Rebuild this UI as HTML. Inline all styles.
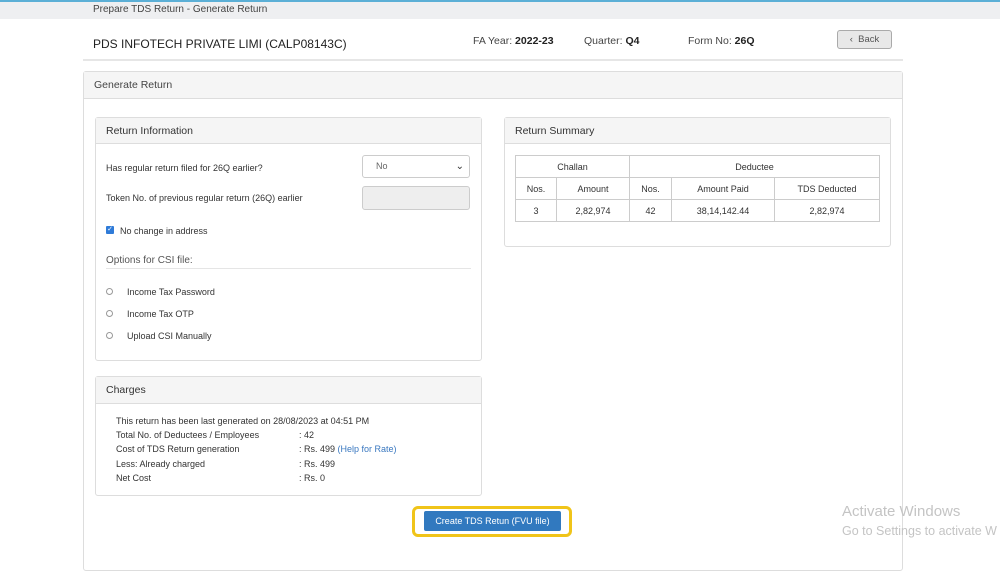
<!DOCTYPE html>
<html><head><meta charset="utf-8"><style>
*{box-sizing:border-box;margin:0;padding:0}
body{width:1000px;height:562px;overflow:hidden;background:#fff;font-family:"Liberation Sans",sans-serif;color:#333;position:relative;font-size:9px}
.a{position:absolute;white-space:nowrap}
.panel{position:absolute;border:1px solid #ddd;border-radius:3px;background:#fff}
.ph{background:#f5f5f5;border-bottom:1px solid #ddd;font-size:10.5px;padding-left:10px;display:flex;align-items:center}
table{border-collapse:collapse;position:absolute;left:515px;top:155px;width:365px;font-size:9px;text-align:center}
td{border:1px solid #ccc;height:22px}
</style></head><body>
<div class="a" style="left:0;top:0;width:1000px;height:2px;background:#5bafd6"></div>
<div class="a" style="left:0;top:2px;width:1000px;height:17px;background:#eeeff1"></div>
<div class="a" style="left:93px;top:4px;font-size:10px;color:#444">Prepare TDS Return - Generate Return</div>
<div class="a" style="left:93px;top:37px;font-size:12px;color:#222">PDS INFOTECH PRIVATE LIMI (CALP08143C)</div>
<div class="a" style="left:473px;top:35px;font-size:10.5px;color:#444">FA Year: <b style="color:#222;font-weight:600">2022-23</b></div>
<div class="a" style="left:584px;top:35px;font-size:10.5px;color:#444">Quarter: <b style="color:#222;font-weight:600">Q4</b></div>
<div class="a" style="left:688px;top:35px;font-size:10.5px;color:#444">Form No: <b style="color:#222;font-weight:600">26Q</b></div>
<div class="a" style="left:837px;top:30px;width:55px;height:19px;border:1px solid #aaa;border-radius:3px;background:#e8e8e8;font-size:9.5px;color:#555;text-align:center;line-height:17px">‹&nbsp; Back</div>
<div class="a" style="left:83px;top:59px;width:820px;height:2px;background:#e6e6e6"></div>
<div class="panel" style="left:83px;top:71px;width:820px;height:500px;background:#fff">
 <div class="ph" style="height:27px;color:#444">Generate Return</div>
</div>
<div class="panel" style="left:95px;top:117px;width:387px;height:244px">
 <div class="ph" style="height:26px">Return Information</div>
</div>
<div class="a" style="left:106px;top:163px">Has regular return filed for 26Q earlier?</div>
<div class="a" style="left:362px;top:155px;width:108px;height:23px;border:1px solid #ccc;border-radius:3px;padding-left:13px;line-height:21px;color:#666">No<span style="position:absolute;right:5px;top:0;font-size:10px;color:#333">&#8964;</span></div>
<div class="a" style="left:106px;top:193px">Token No. of previous regular return (26Q) earlier</div>
<div class="a" style="left:362px;top:186px;width:108px;height:24px;border:1px solid #ccc;border-radius:3px;background:#eee"></div>
<div class="a" style="left:106px;top:226px;width:8px;height:8px;background:#2f7bd8;border-radius:1px;color:#fff;font-size:7px;line-height:8px;text-align:center">✓</div>
<div class="a" style="left:120px;top:226px">No change in address</div>
<div class="a" style="left:106px;top:255px;font-size:10px;color:#555">Options for CSI file:</div>
<div class="a" style="left:106px;top:268px;width:365px;height:1px;background:#e5e5e5"></div>
<div class="a" style="left:106px;top:288px;width:7px;height:7px;border:1px solid #999;border-radius:50%"></div>
<div class="a" style="left:127px;top:287px">Income Tax Password</div>
<div class="a" style="left:106px;top:310px;width:7px;height:7px;border:1px solid #999;border-radius:50%"></div>
<div class="a" style="left:127px;top:309px">Income Tax OTP</div>
<div class="a" style="left:106px;top:332px;width:7px;height:7px;border:1px solid #999;border-radius:50%"></div>
<div class="a" style="left:127px;top:331px">Upload CSI Manually</div>

<div class="panel" style="left:504px;top:117px;width:387px;height:130px">
 <div class="ph" style="height:26px">Return Summary</div>
</div>
<table>
<tr><td colspan="2" style="width:114px">Challan</td><td colspan="3">Deductee</td></tr>
<tr><td style="width:41px">Nos.</td><td style="width:73px">Amount</td><td style="width:42px">Nos.</td><td style="width:103px">Amount Paid</td><td>TDS Deducted</td></tr>
<tr><td>3</td><td>2,82,974</td><td>42</td><td>38,14,142.44</td><td>2,82,974</td></tr>
</table>

<div class="panel" style="left:95px;top:376px;width:387px;height:120px">
 <div class="ph" style="height:27px">Charges</div>
</div>
<div class="a" style="left:116px;top:416px">This return has been last generated on 28/08/2023 at 04:51 PM</div>
<div class="a" style="left:116px;top:430px">Total No. of Deductees / Employees</div><div class="a" style="left:299px;top:430px">: 42</div>
<div class="a" style="left:116px;top:444px">Cost of TDS Return generation</div><div class="a" style="left:299px;top:444px">: Rs. 499 <span style="color:#3a78c0">(Help for Rate)</span></div>
<div class="a" style="left:116px;top:459px">Less: Already charged</div><div class="a" style="left:299px;top:459px">: Rs. 499</div>
<div class="a" style="left:116px;top:473px">Net Cost</div><div class="a" style="left:299px;top:473px">: Rs. 0</div>

<div class="a" style="left:412px;top:506px;width:160px;height:31px;border:3px solid #f0c419;border-radius:6px"></div>
<div class="a" style="left:424px;top:511px;width:137px;height:20px;background:#3179bf;border-radius:2px;color:#fff;font-size:9px;text-align:center;line-height:20px">Create TDS Retun (FVU file)</div>

<div class="a" style="left:842px;top:503px;font-size:15px;color:#c4c4c4">Activate Windows</div>
<div class="a" style="left:842px;top:524px;font-size:12.5px;color:#c4c4c4">Go to Settings to activate W</div>
</body></html>
